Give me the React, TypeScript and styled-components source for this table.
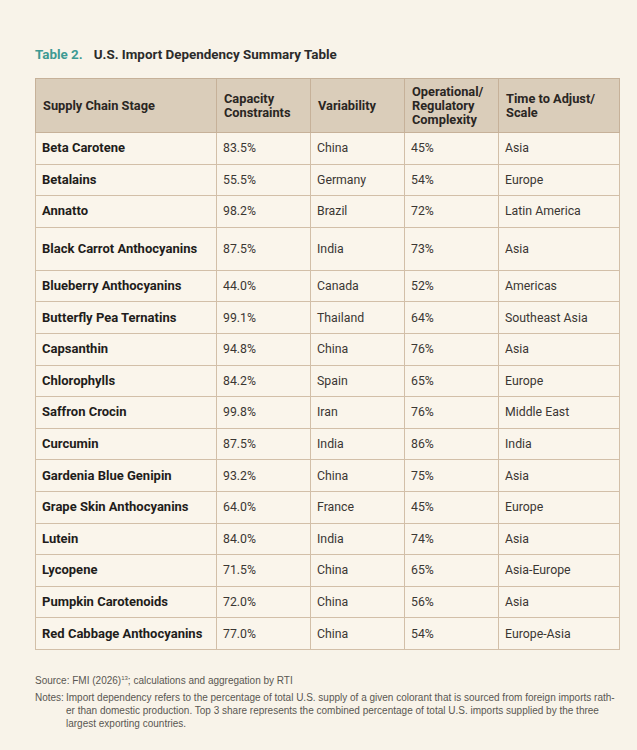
import React from "react";
import styled, { createGlobalStyle } from "styled-components";

type Entry = {
  stage: string;
  capacity: string;
  variability: string;
  complexity: string;
  region: string;
  tall?: boolean;
};

const rows: Entry[] = [
  { stage: "Beta Carotene", capacity: "83.5%", variability: "China", complexity: "45%", region: "Asia" },
  { stage: "Betalains", capacity: "55.5%", variability: "Germany", complexity: "54%", region: "Europe" },
  { stage: "Annatto", capacity: "98.2%", variability: "Brazil", complexity: "72%", region: "Latin America" },
  { stage: "Black Carrot Anthocyanins", capacity: "87.5%", variability: "India", complexity: "73%", region: "Asia", tall: true },
  { stage: "Blueberry Anthocyanins", capacity: "44.0%", variability: "Canada", complexity: "52%", region: "Americas" },
  { stage: "Butterfly Pea Ternatins", capacity: "99.1%", variability: "Thailand", complexity: "64%", region: "Southeast Asia" },
  { stage: "Capsanthin", capacity: "94.8%", variability: "China", complexity: "76%", region: "Asia" },
  { stage: "Chlorophylls", capacity: "84.2%", variability: "Spain", complexity: "65%", region: "Europe" },
  { stage: "Saffron Crocin", capacity: "99.8%", variability: "Iran", complexity: "76%", region: "Middle East" },
  { stage: "Curcumin", capacity: "87.5%", variability: "India", complexity: "86%", region: "India" },
  { stage: "Gardenia Blue Genipin", capacity: "93.2%", variability: "China", complexity: "75%", region: "Asia" },
  { stage: "Grape Skin Anthocyanins", capacity: "64.0%", variability: "France", complexity: "45%", region: "Europe" },
  { stage: "Lutein", capacity: "84.0%", variability: "India", complexity: "74%", region: "Asia" },
  { stage: "Lycopene", capacity: "71.5%", variability: "China", complexity: "65%", region: "Asia-Europe" },
  { stage: "Pumpkin Carotenoids", capacity: "72.0%", variability: "China", complexity: "56%", region: "Asia" },
  { stage: "Red Cabbage Anthocyanins", capacity: "77.0%", variability: "China", complexity: "54%", region: "Europe-Asia" },
];

const GlobalStyle = createGlobalStyle`
  html, body {
    margin: 0;
    padding: 0;
    background: #f8f3e9;
  }
  body {
    font-family: Roboto, "Liberation Sans", sans-serif;
    color: #222;
  }
`;

const Page = styled.div`
  width: 637px;
  height: 750px;
  box-sizing: border-box;
  padding: 47px 0 0 35px;
  background: #f8f3e9;
`;

const Caption = styled.h2`
  margin: 0 0 15px;
  display: flex;
  gap: 11px;
  font-size: 13.4px;
  font-weight: 700;
  line-height: 16px;
  color: #2b2b2b;
`;

const CaptionLabel = styled.span`
  color: #3d9a93;
`;

const Table = styled.table`
  width: 584px;
  border-collapse: collapse;
  table-layout: fixed;
  border: 1px solid #c2aa8f;
  background: #faf5eb;
`;

const HeadCell = styled.th`
  background: #dacdba;
  border: 1px solid #c6b199;
  height: 53px;
  padding: 0 7px;
  text-align: left;
  vertical-align: middle;
  font-size: 12.8px;
  font-weight: 700;
  line-height: 14px;
  color: #2a2623;
`;

const Row = styled.tr<{ $tall?: boolean }>`
  height: ${(p) => (p.$tall ? "43px" : "31.6px")};
`;

const Cell = styled.td<{ $strong?: boolean }>`
  border: 1px solid #d2bfa8;
  padding: 0 6px;
  vertical-align: middle;
  font-size: ${(p) => (p.$strong ? "13px" : "12.3px")};
  line-height: 14px;
  font-weight: ${(p) => (p.$strong ? 700 : 400)};
  color: ${(p) => (p.$strong ? "#1f1d1b" : "#3a3733")};
  white-space: nowrap;
`;

const Footer = styled.div`
  margin-top: 24px;
  width: 600px;
  font-family: "Liberation Sans", Arial, sans-serif;
  font-size: 10px;
  line-height: 13px;
  color: #5a5752;
`;

const Source = styled.p`
  margin: 0 0 4px;
`;

const Notes = styled.div`
  display: flex;
`;

const NotesLabel = styled.span`
  width: 31px;
  flex: none;
`;

const Sup = styled.sup`
  font-size: 6px;
  line-height: 0;
`;

export default function App() {
  return (
    <Page>
      <GlobalStyle />
      <Caption>
        <CaptionLabel>Table 2.</CaptionLabel>
        <span>U.S. Import Dependency Summary Table</span>
      </Caption>
      <Table>
        <colgroup>
          <col style={{ width: 181 }} />
          <col style={{ width: 94 }} />
          <col style={{ width: 94 }} />
          <col style={{ width: 94 }} />
          <col style={{ width: 121 }} />
        </colgroup>
        <thead>
          <tr>
            <HeadCell>Supply Chain Stage</HeadCell>
            <HeadCell>
              Capacity
              <br />
              Constraints
            </HeadCell>
            <HeadCell>Variability</HeadCell>
            <HeadCell>
              Operational/
              <br />
              Regulatory
              <br />
              Complexity
            </HeadCell>
            <HeadCell>
              Time to Adjust/
              <br />
              Scale
            </HeadCell>
          </tr>
        </thead>
        <tbody>
          {rows.map((r) => (
            <Row key={r.stage} $tall={r.tall}>
              <Cell $strong>{r.stage}</Cell>
              <Cell>{r.capacity}</Cell>
              <Cell>{r.variability}</Cell>
              <Cell>{r.complexity}</Cell>
              <Cell>{r.region}</Cell>
            </Row>
          ))}
        </tbody>
      </Table>
      <Footer>
        <Source>
          Source: FMI (2026)<Sup>13</Sup>; calculations and aggregation by RTI
        </Source>
        <Notes>
          <NotesLabel>Notes:</NotesLabel>
          <span>
            Import dependency refers to the percentage of total U.S. supply of a given colorant that is sourced from foreign imports rath-
            <br />
            er than domestic production. Top 3 share represents the combined percentage of total U.S. imports supplied by the three
            <br />
            largest exporting countries.
          </span>
        </Notes>
      </Footer>
    </Page>
  );
}
